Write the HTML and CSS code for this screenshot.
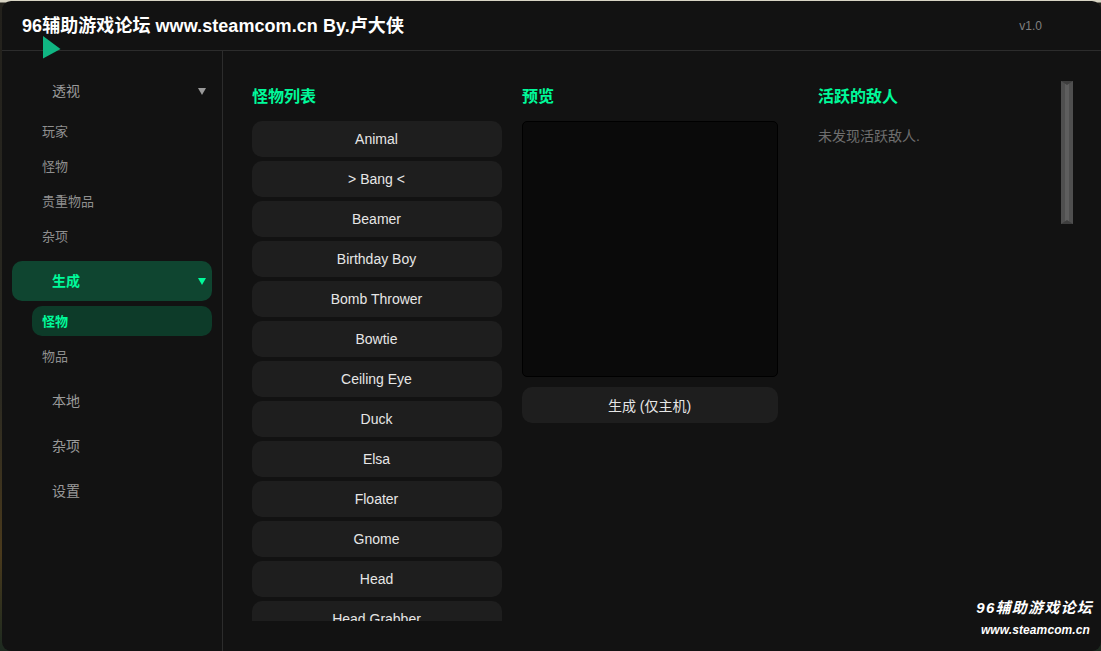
FILE: index.html
```html
<!DOCTYPE html>
<html lang="zh-CN">
  <head>
    <meta charset="UTF-8" />
    <meta name="viewport" content="width=device-width, initial-scale=1.0" />
    <title>96辅助游戏论坛</title>
    <link rel="stylesheet" href="styles.css">
  </head>
  <body>
    <div class="window">
      <div class="header">
        <strong class="title">96辅助游戏论坛 www.steamcom.cn By.卢大侠</strong>
        <span class="version">v1.0</span>
      </div>
      <svg class="cursor" width="18" height="23" viewBox="0 0 18 23">
        <path d="M0 0 L17.5 13 L0 22.5 Z" fill="#10b582" />
      </svg>

      <div class="body">
        <!-- sidebar -->
        <div class="sidebar">
          <div class="navHead">透视<i class="arrow"></i></div>
          <div class="subList">
            <div class="navSub">玩家</div>
            <div class="navSub">怪物</div>
            <div class="navSub">贵重物品</div>
            <div class="navSub">杂项</div>
          </div>
          <div class="navHead active">生成<i class="arrow"></i></div>
          <div class="subList">
            <div class="navSub active">怪物</div>
            <div class="navSub">物品</div>
          </div>
          <div class="navHead">本地</div>
          <div class="navHead">杂项</div>
          <div class="navHead">设置</div>
        </div>

        <!-- content -->
        <div class="main">
          <div class="colList">
            <h2 class="colTitle">怪物列表</h2>
            <div class="monsterList">
              <div class="button">Animal</div>
              <div class="button">&gt; Bang &lt;</div>
              <div class="button">Beamer</div>
              <div class="button">Birthday Boy</div>
              <div class="button">Bomb Thrower</div>
              <div class="button">Bowtie</div>
              <div class="button">Ceiling Eye</div>
              <div class="button">Duck</div>
              <div class="button">Elsa</div>
              <div class="button">Floater</div>
              <div class="button">Gnome</div>
              <div class="button">Head</div>
              <div class="button">Head Grabber</div>
            </div>
          </div>
          <div class="colPreview">
            <h2 class="colTitle">预览</h2>
            <div class="preview"></div>
            <div class="button">生成 (仅主机)</div>
          </div>
          <div class="colEnemies">
            <h2 class="colTitle">活跃的敌人</h2>
            <p class="empty">未发现活跃敌人.</p>
          </div>
          <div class="scrollThumb"></div>
        </div>
      </div>

      <div class="watermark">
        <div class="wmTitle">96辅助游戏论坛</div>
        <div class="wmUrl">www.steamcom.cn</div>
      </div>
    </div>
  </body>
</html>
```

FILE: styles.css
```css
* {
  box-sizing: border-box;
}
html,
body {
  height: 100%;
}
body {
  margin: 0;
  padding: 1px 0 0 2px;
  overflow: hidden;
  font-family: "Liberation Sans", "Noto Sans CJK SC", sans-serif;
  /* desktop behind the window */
  background: linear-gradient(180deg, #d8d4c4 0, #d8d4c4 2px, #23211c 3px, #2b2a22 60%, #4a3a1c 85%, #1d2a20 100%);
}
.window {
  position: relative;
  height: 650px;
  background: #121212;
  border-radius: 9px;
  overflow: hidden;
  display: flex;
  flex-direction: column;
}
.header {
  height: 50px;
  flex-shrink: 0;
  display: flex;
  justify-content: space-between;
  align-items: center;
  padding: 0 59px 3px 20px;
  border-bottom: 1px solid #2c2c2c;
}
.title {
  font-size: 18px;
  letter-spacing: 0.06px;
  color: #ffffff;
}
.version {
  margin-top: 4px;
  font-size: 12px;
  color: #808080;
}
.cursor {
  position: absolute;
  left: 41px;
  top: 35px;
}
.body {
  flex: 1;
  display: flex;
  min-height: 0;
}
.sidebar {
  width: 221px;
  flex-shrink: 0;
  padding: 20px 10px 0;
  border-right: 1px solid #2c2c2c;
}
.navHead {
  display: flex;
  justify-content: space-between;
  align-items: center;
  width: 200px;
  height: 40px;
  margin-bottom: 5px;
  padding: 0 6px 2px 40px;
  border-radius: 10px;
  font-size: 14px;
  color: #9a9a9a;
}
.navHead.active {
  background: #0f4530;
  color: #00fa9a;
  font-weight: bold;
}
.arrow {
  width: 0;
  height: 0;
  margin-top: 2px;
  border-left: 4.5px solid transparent;
  border-right: 4.5px solid transparent;
  border-top: 7px solid #999999;
}
.active .arrow {
  border-top-color: #00fa9a;
}
.subList {
  margin-left: 20px;
  padding-bottom: 5px;
}
.navSub {
  display: flex;
  align-items: center;
  width: 180px;
  height: 30px;
  margin-bottom: 5px;
  padding: 0 0 2px 10px;
  border-radius: 10px;
  font-size: 13px;
  color: #8f8f8f;
}
.navSub.active {
  background: #0d3b29;
  color: #00fa9a;
  font-weight: bold;
}
.main {
  flex: 1;
  display: flex;
  min-width: 0;
  padding: 30px 28px 0 29px;
}
.colTitle {
  height: 30px;
  margin: 0 0 10px;
  font-size: 16px;
  line-height: 32px;
  color: #00fa9a;
}
.colList {
  width: 250px;
  margin-right: 20px;
}
.monsterList {
  height: 500px;
  overflow: hidden;
  display: flex;
  flex-direction: column;
  gap: 4px;
}
.button {
  flex-shrink: 0;
  display: flex;
  justify-content: center;
  align-items: center;
  height: 36px;
  background: #1e1e1e;
  border-radius: 10px;
  padding-right: 1px;
  font-size: 14px;
  color: #e6e6e6;
}
.colPreview {
  width: 256px;
  margin-right: 40px;
}
.preview {
  height: 256px;
  margin-bottom: 10px;
  background: #0a0a0a;
  border: 1px solid #000000;
  border-radius: 5px;
}
.colEnemies {
  flex: 1;
}
.empty {
  margin: 0;
  padding-top: 5px;
  font-size: 14px;
  line-height: 20px;
  color: #6e6e6e;
}
.scrollThumb {
  position: relative;
  width: 12px;
  height: 143px;
  background: linear-gradient(90deg, #4f4f4f 0, #4f4f4f 4px, #5e5e5e 4px, #5e5e5e 8px, #4f4f4f 8px);
}
.scrollThumb::before,
.scrollThumb::after {
  content: "";
  position: absolute;
  left: 0;
  border-left: 6px solid transparent;
  border-right: 6px solid transparent;
}
.scrollThumb::before {
  top: 0;
  border-top: 4px solid #3e3e3e;
}
.scrollThumb::after {
  bottom: 0;
  border-bottom: 4px solid #3e3e3e;
}
.watermark {
  position: absolute;
  right: 8px;
  bottom: 12px;
  color: #ffffff;
  font-style: italic;
  font-weight: bold;
  text-align: right;
}
.wmTitle {
  font-size: 15px;
  line-height: 20px;
  letter-spacing: 1.25px;
  margin-bottom: 3px;
}
.wmUrl {
  font-size: 12px;
  line-height: 18px;
  letter-spacing: 0.1px;
  padding-right: 3px;
}
```
